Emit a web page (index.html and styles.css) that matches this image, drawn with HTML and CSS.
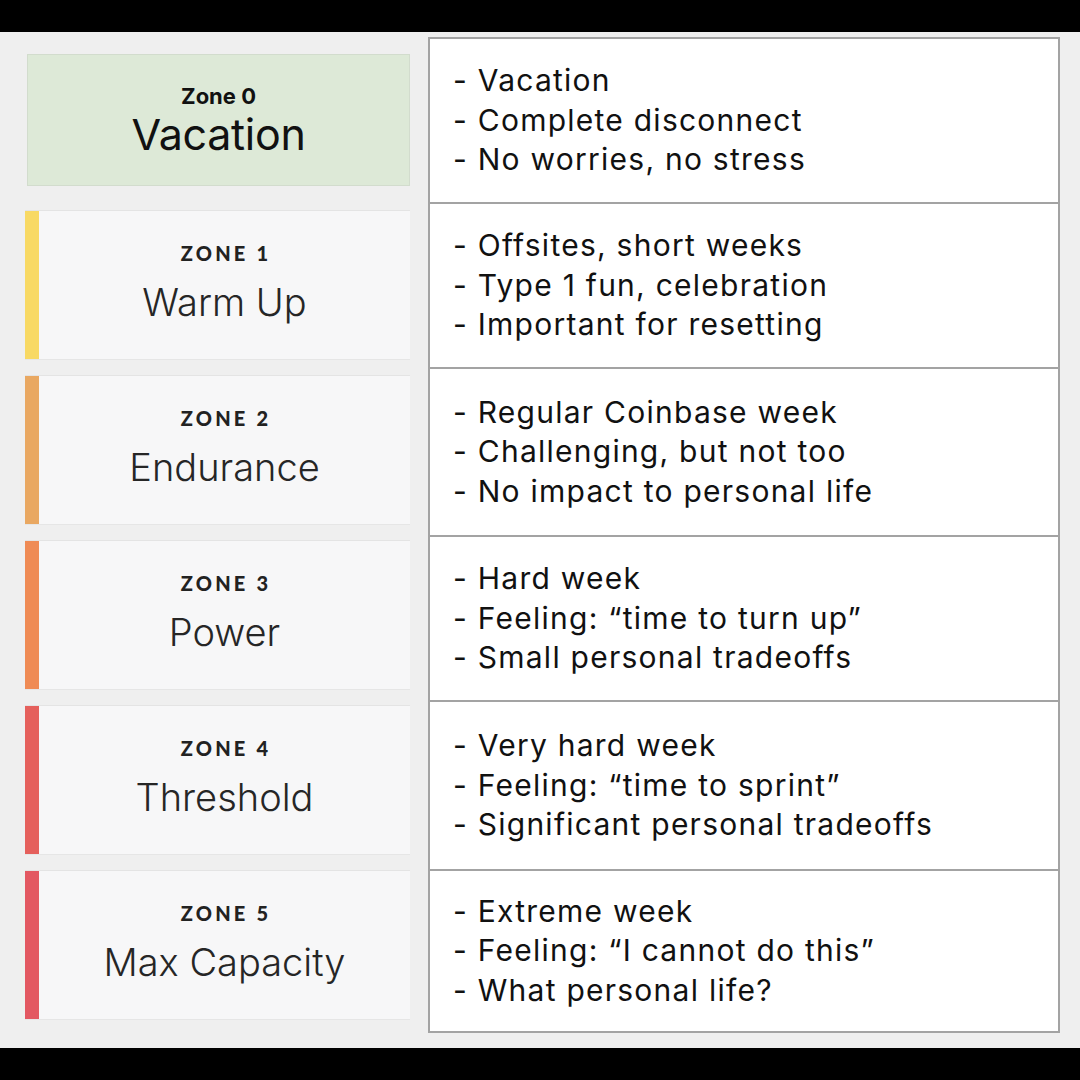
FILE: index.html
```html
<!DOCTYPE html>
<html>
<head>
<meta charset="utf-8">
<link rel="stylesheet" href="styles.css">
</head>
<body>
<div class="bar"></div>
<main class="board">
  <section class="zones">
    <div class="zone0">
      <div class="z0-label">Zone 0</div>
      <div class="z0-title">Vacation</div>
    </div>
    <div class="zone z1"><div class="accent"></div><div class="zone-body"><div class="zone-label">ZONE 1</div><div class="zone-title">Warm Up</div></div></div>
    <div class="zone z2"><div class="accent"></div><div class="zone-body"><div class="zone-label">ZONE 2</div><div class="zone-title">Endurance</div></div></div>
    <div class="zone z3"><div class="accent"></div><div class="zone-body"><div class="zone-label">ZONE 3</div><div class="zone-title">Power</div></div></div>
    <div class="zone z4"><div class="accent"></div><div class="zone-body"><div class="zone-label">ZONE 4</div><div class="zone-title">Threshold</div></div></div>
    <div class="zone z5"><div class="accent"></div><div class="zone-body"><div class="zone-label">ZONE 5</div><div class="zone-title">Max Capacity</div></div></div>
  </section>
  <section class="table">
    <div class="row r0"><p>- Vacation</p><p>- Complete disconnect</p><p>- No worries, no stress</p></div>
    <div class="row r1"><p>- Offsites, short weeks</p><p>- Type 1 fun, celebration</p><p>- Important for resetting</p></div>
    <div class="row r2"><p>- Regular Coinbase week</p><p>- Challenging, but not too</p><p>- No impact to personal life</p></div>
    <div class="row r3"><p>- Hard week</p><p>- Feeling: “time to turn up”</p><p>- Small personal tradeoffs</p></div>
    <div class="row r4"><p>- Very hard week</p><p>- Feeling: “time to sprint”</p><p>- Significant personal tradeoffs</p></div>
    <div class="row r5"><p>- Extreme week</p><p>- Feeling: “I cannot do this”</p><p>- What personal life?</p></div>
  </section>
</main>
<div class="bar"></div>
</body>
</html>
```
FILE: styles.css
```css
* { box-sizing: border-box; }
html, body { margin: 0; padding: 0; }
body {
  width: 1080px;
  height: 1080px;
  background: #000;
  font-family: Inter, "Liberation Sans", sans-serif;
  overflow: hidden;
}
.bar { height: 32px; background: #000; }
.board {
  height: 1016px;
  background: #efefef;
  display: flex;
  gap: 18px;
  padding-left: 25px;
}
.zones {
  width: 385px;
  display: flex;
  flex-direction: column;
  gap: 15px;
  padding-top: 22px;
}
.zone0 {
  margin-left: 2px;
  height: 132px;
  margin-bottom: 9px;
  background: #dde9d7;
  border: 1px solid #d2dccd;
  display: flex;
  flex-direction: column;
  align-items: center;
  justify-content: center;
  color: #111;
}
.z0-label {
  font-weight: 700;
  font-size: 22px;
  line-height: 28px;
}
.z0-title {
  font-size: 43px;
  font-weight: 400;
  line-height: 48px;
  letter-spacing: -0.3px;
}
.zone {
  height: 150px;
  display: flex;
  background: #f7f7f8;
  border-top: 1px solid #e4e4e4;
  border-bottom: 1px solid #e6e6e6;
}
.accent { width: 14px; }
.z1 .accent { background: #f8d964; }
.z2 .accent { background: #e9a862; }
.z3 .accent { background: #ef8b55; }
.z4 .accent { background: #e5605c; }
.z5 .accent { background: #e35862; }
.zone-body {
  flex: 1;
  display: flex;
  flex-direction: column;
  align-items: center;
  justify-content: center;
  padding-bottom: 4px;
}
.zone-label {
  font-family: Lato, "Noto Sans", sans-serif;
  font-weight: 900;
  font-size: 20px;
  letter-spacing: 3.2px;
  line-height: 24px;
  color: #222;
  margin-left: 3px;
}
.zone-title {
  font-weight: 300;
  font-size: 38px;
  line-height: 46px;
  color: #262626;
  margin-top: 14px;
}
.table {
  width: 632px;
  height: 996px;
  margin-top: 5px;
  background: #fff;
  border: 2px solid #a3a3a3;
  display: flex;
  flex-direction: column;
}
.row {
  display: flex;
  flex-direction: column;
  justify-content: center;
  padding-left: 23px;
  color: #111;
}
.row + .row { border-top: 2px solid #a3a3a3; }
.row p {
  margin: 0;
  font-size: 30px;
  letter-spacing: 1.25px;
  line-height: 39.5px;
}
.r0 { height: 163px; }
.r1 { height: 165px; }
.r2 { height: 168px; }
.r3 { height: 165px; }
.r4 { height: 169px; }
.r5 { flex: 1; }
```
